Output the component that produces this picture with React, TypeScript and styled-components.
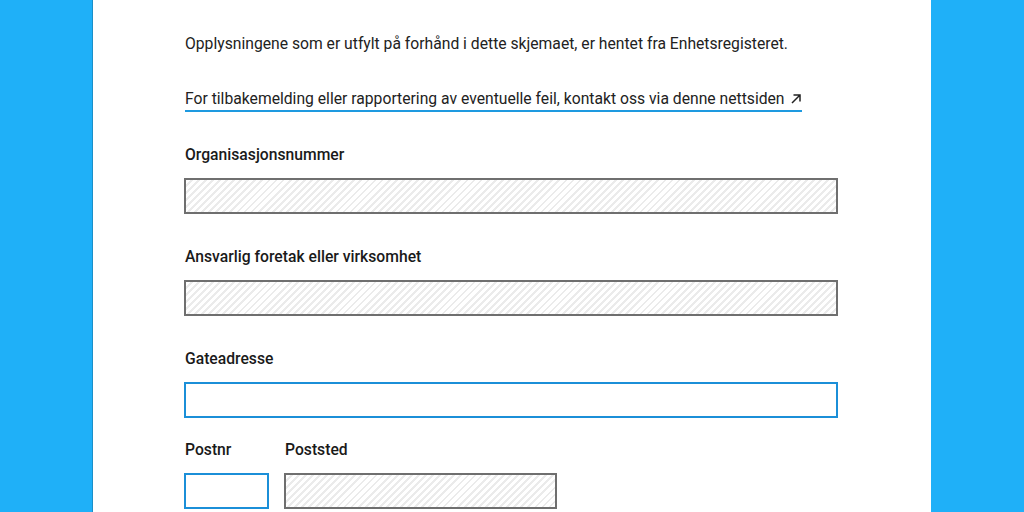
import React from "react";
import styled, { createGlobalStyle, css } from "styled-components";

const Global = createGlobalStyle`
  html, body { margin: 0; padding: 0; background: #1fb0f8; }
  body { font-family: Roboto, "Noto Sans", Arial, sans-serif; color: #222; }
  * { box-sizing: border-box; }
`;

const Page = styled.div`
  min-height: 512px;
  background: #1fb0f8;
  display: flex;
`;

const Panel = styled.main`
  width: 839px;
  margin-left: 92px;
  min-height: 512px;
  background: #fff;
  border-left: 1px solid #1b8fc8;
  padding: 32px 0 0 91px;
  display: flex;
  flex-direction: column;
`;

const Intro = styled.p`
  margin: 0 0 0 1px;
  font-size: 15.7px;
  line-height: 24px;
  color: #222;
`;

const LinkRow = styled.div`
  margin-top: 32px;
  padding-left: 1px;
  display: flex;
`;

const ExtLink = styled.a`
  font-size: 15.7px;
  line-height: 22px;
  color: #222;
  text-decoration: none;
  border-bottom: 2px solid #1e9ae0;
  display: inline-flex;
  align-items: center;
  gap: 5px;
`;

const Field = styled.div<{ $top: number }>`
  margin-top: ${(p) => p.$top}px;
  display: flex;
  flex-direction: column;
`;

const Label = styled.label`
  font-size: 15.7px;
  font-weight: 500;
  line-height: 20px;
  color: #1a1a1a;
  margin: 0 0 13px 1px;
`;

const Input = styled.div<{ $disabled?: boolean; $w?: number }>`
  width: ${(p) => p.$w ?? 654}px;
  height: 36px;
  ${(p) =>
    p.$disabled
      ? css`
          border: 2px solid #6f6f6f;
          background: repeating-linear-gradient(
            135deg,
            #ffffff 0px,
            #ffffff 3px,
            #ebebeb 3px,
            #ebebeb 5px
          );
        `
      : css`
          border: 2px solid #1b8fd8;
          background: #fff;
        `}
`;

const Row = styled.div`
  display: flex;
  gap: 15px;
  margin-top: 22px;
`;

const Arrow = () => (
  <svg width="12" height="12" viewBox="0 0 12 12" fill="none" stroke="#222" strokeWidth="1.5">
    <path d="M2 10 L10 2 M3.5 2 H10 V8.5" />
  </svg>
);

export default function App() {
  return (
    <>
      <Global />
      <Page>
        <Panel>
          <Intro>Opplysningene som er utfylt på forhånd i dette skjemaet, er hentet fra Enhetsregisteret.</Intro>
          <LinkRow>
            <ExtLink href="#">
              For tilbakemelding eller rapportering av eventuelle feil, kontakt oss via denne nettsiden
              <Arrow />
            </ExtLink>
          </LinkRow>
          <Field $top={33}>
            <Label>Organisasjonsnummer</Label>
            <Input $disabled />
          </Field>
          <Field $top={33}>
            <Label>Ansvarlig foretak eller virksomhet</Label>
            <Input $disabled />
          </Field>
          <Field $top={33}>
            <Label>Gateadresse</Label>
            <Input />
          </Field>
          <Row>
            <Field $top={0}>
              <Label>Postnr</Label>
              <Input $w={85} />
            </Field>
            <Field $top={0}>
              <Label>Poststed</Label>
              <Input $disabled $w={273} />
            </Field>
          </Row>
        </Panel>
      </Page>
    </>
  );
}
